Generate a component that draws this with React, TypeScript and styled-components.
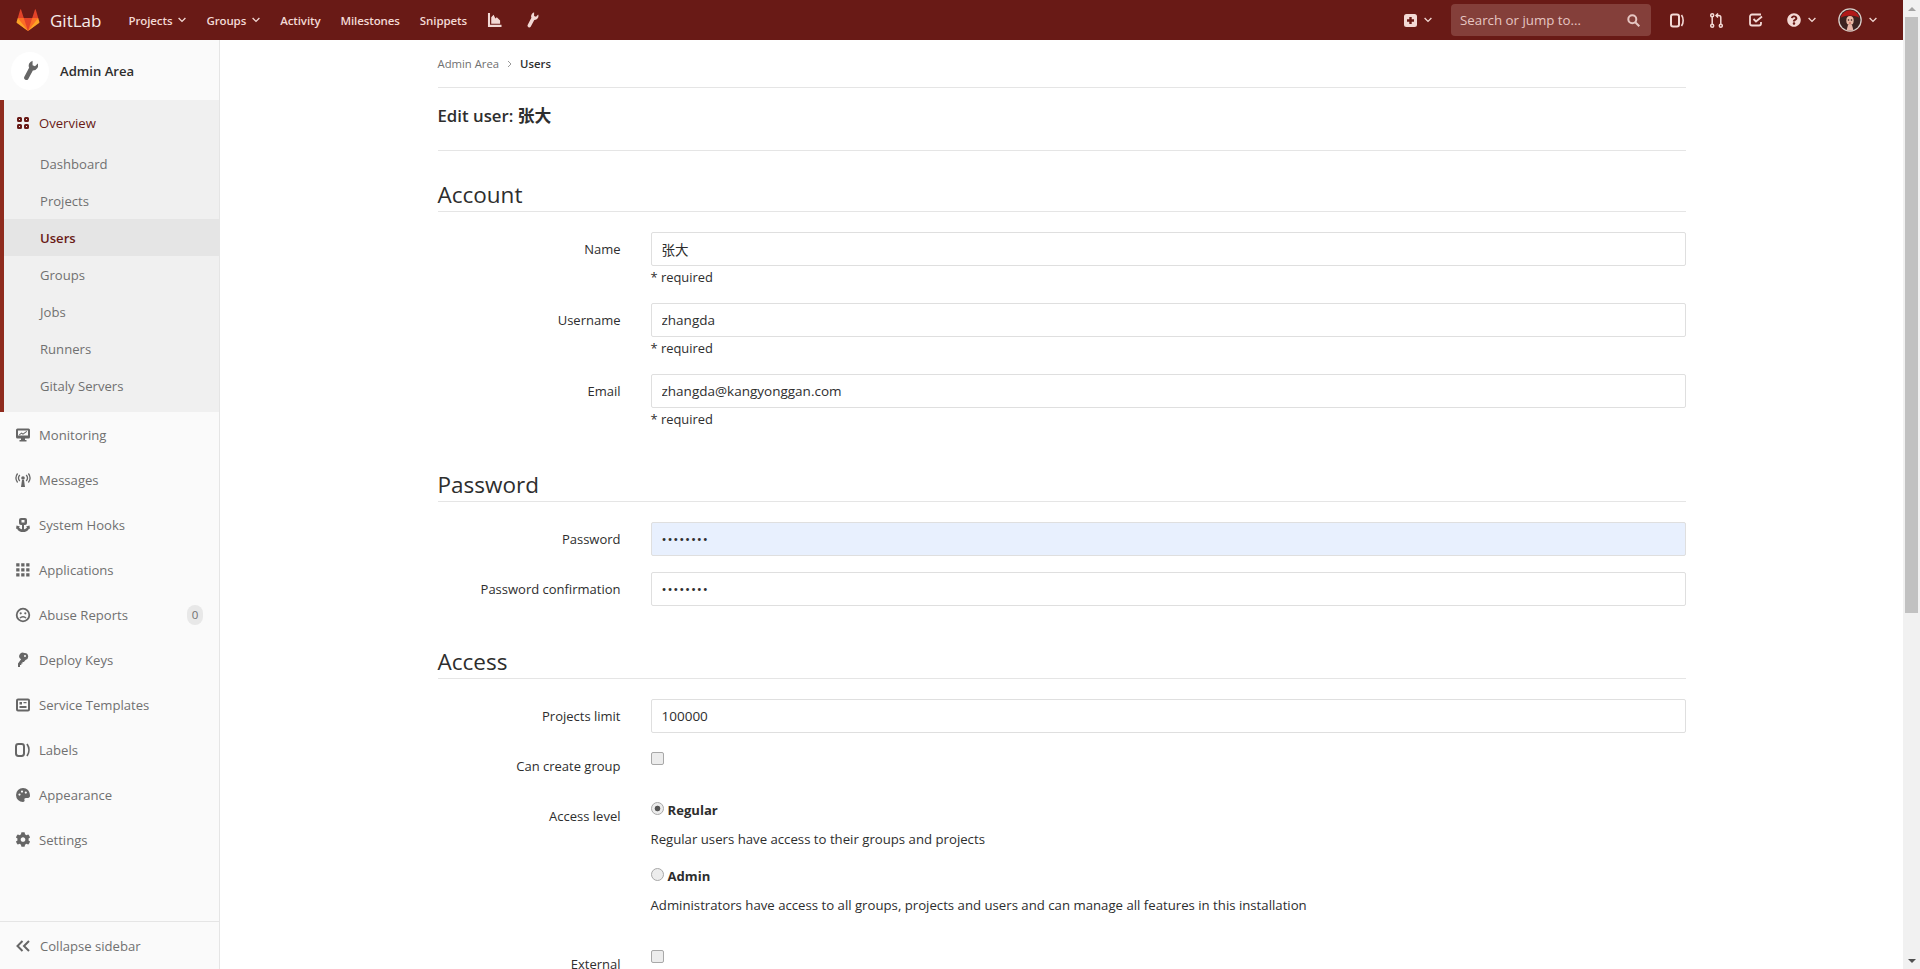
import { ReactNode } from "react";
import styled, { createGlobalStyle } from "styled-components";
import { FaCog, FaQuestionCircle } from "react-icons/fa";

const font = `"Open Sans", "Noto Sans CJK SC", sans-serif`;
const navText = "#f3d9d5";

const GlobalStyle = createGlobalStyle`
  html, body { margin: 0; height: 100%; overflow: hidden; }
  body { font-family: ${font}; font-size: 13.1px; color: #2e2e2e; background: #fff; }
  #root { height: 100%; }
  * { box-sizing: border-box; }
`;

function Icon({ size = 16, children }: { size?: number; children: ReactNode }) {
  return (
    <svg width={size} height={size} viewBox="0 0 16 16" fill="currentColor">
      {children}
    </svg>
  );
}

const Chevron = () => (
  <svg width="8" height="6" viewBox="0 0 8 6" fill="none" stroke="currentColor" strokeWidth="1.3">
    <path d="M.6 1l3.4 3.4L7.4 1" />
  </svg>
);

const Tanuki = () => (
  <svg width="24" height="23" viewBox="0 0 36 36">
    <path fill="#e24329" d="M2 14l9.38 9v-9l-4.3-13.2a.62.62 0 0 0-1.17 0z" />
    <path fill="#e24329" d="M34 14l-9.38 9v-9l4.3-13.2a.62.62 0 0 1 1.17 0z" />
    <path fill="#e24329" d="M18 34.38L3 14h30z" />
    <path fill="#fc6d26" d="M18 34.38L11.38 14H2l4 11z" />
    <path fill="#fc6d26" d="M18 34.38L24.62 14H34l-4 11z" />
    <path fill="#fca326" d="M2 14L.1 20.16c-.18.565 0 1.2.5 1.56l17.42 12.66z" />
    <path fill="#fca326" d="M34 14l1.9 6.16c.18.565 0 1.2-.5 1.56L18 34.38z" />
  </svg>
);

const Wrench = ({ width, height }: { width: number; height: number }) => (
  <svg width={width} height={height} viewBox="0 0 16 22" fill="currentColor">
    <path d="M10.5.5A5.5 5.5 0 0 0 6.5 8L1.3 18a2.4 2.4 0 0 0 4.2 2.2L10.5 11a5.5 5.5 0 0 0 5.3-7.5l-3 3-2.600-1V.5z" />
  </svg>
);

const ChartIcon = () => (
  <svg width="15" height="14" viewBox="0 0 16 15" fill="currentColor">
    <path d="M1 0h2.200v12.500H15.500V15H1z" />
    <path d="M4.500 4.500L7 2l2 4 1.500-1.500L14 8v3.500H4.500z" />
  </svg>
);

const PlusSquare = () => (
  <svg width="13" height="13" viewBox="0 0 13 13" fill="currentColor">
    <path
      fillRule="evenodd"
      d="M2.500 0h8A2.500 2.500 0 0 1 13 2.500v8a2.500 2.500 0 0 1-2.500 2.500h-8A2.500 2.500 0 0 1 0 10.500v-8A2.500 2.500 0 0 1 2.500 0zM5.300 3v2.300H3v2.400h2.300V10h2.400V7.700H10V5.300H7.700V3z"
    />
  </svg>
);

const SearchIcon = () => (
  <svg width="13" height="13" viewBox="0 0 13 13" fill="none" stroke="currentColor" strokeWidth="2">
    <circle cx="5.300" cy="5.300" r="4" />
    <path d="M8.300 8.300l4 4" />
  </svg>
);

const IssuesIcon = () => (
  <svg width="14" height="15" viewBox="0 0 14 15" fill="none" stroke="currentColor">
    <rect x="1" y="1.500" width="8" height="12" rx="2" strokeWidth="2" />
    <path d="M11.500 2c2.200 3 2.200 8 0 11" strokeWidth="1.600" />
  </svg>
);

const MergeIcon = () => (
  <svg width="13" height="15" viewBox="0 0 13 15" fill="none" stroke="currentColor" strokeWidth="1.500">
    <circle cx="2.200" cy="2.300" r="1.500" />
    <circle cx="2.200" cy="12.700" r="1.500" />
    <circle cx="10.800" cy="12.700" r="1.500" />
    <path d="M2.200 4v7M10.800 11V4.500Q10.800 2.500 8.800 2.500H6.500M8 .5L6 2.500l2 2" />
  </svg>
);

const TodoIcon = () => (
  <svg width="14" height="14" viewBox="0 0 14 14" fill="none" stroke="currentColor" strokeWidth="1.800">
    <path d="M12 1.500H3A2 2 0 0 0 1 3.500v7a2 2 0 0 0 2 2h7a2 2 0 0 0 2-2V9" />
    <path d="M4.500 6l2.500 2.500 6-5" />
  </svg>
);

const UserAvatar = () => (
  <svg width="24" height="24" viewBox="0 0 24 24">
    <circle cx="12" cy="12" r="11.800" fill="#d8cfca" />
    <circle cx="12" cy="12" r="10.500" fill="#3c2220" />
    <path d="M2.500 10a9.700 9.700 0 0 1 19 0c-3-3.500-16-3.500-19 0z" fill="#b01818" />
    <ellipse cx="12" cy="12.500" rx="3.700" ry="4.500" fill="#e9b8a4" />
    <path d="M8.500 22.400l1.500-5.400h4l1.500 5.400z" fill="#e6b4a6" />
    <circle cx="10.500" cy="12" r=".8" fill="#2a1414" />
    <circle cx="13.500" cy="12" r=".8" fill="#2a1414" />
    <path d="M11.200 15h1.600" stroke="#c23a3a" />
  </svg>
);

const sideIcons: Record<string, ReactNode> = {
  monitoring: (
    <Icon>
      <path
        fillRule="evenodd"
        d="M2.500 1.500h11A1.500 1.500 0 0 1 15 3v7a1.500 1.500 0 0 1-1.500 1.500H10v1.500h1.500v1.500h-7V13H6v-1.500H2.500A1.500 1.500 0 0 1 1 10V3a1.500 1.500 0 0 1 1.500-1.500zM3 3.500v5h10v-5zM4 7.500l2.500-2 1.500 1L11.500 4l.6.800L8 7.800l-1.500-1-2 1.500z"
      />
    </Icon>
  ),
  messages: (
    <Icon>
      <circle cx="8" cy="6" r="1.800" />
      <path d="M7 8h2l1 7H6z" />
      <path
        d="M4.800 3a4.500 4.500 0 0 0 0 6M11.200 3a4.500 4.500 0 0 1 0 6M2.600 1.500a7.500 7.500 0 0 0 0 9M13.400 1.500a7.500 7.500 0 0 1 0 9"
        fill="none"
        stroke="currentColor"
        strokeWidth="1.300"
      />
    </Icon>
  ),
  hooks: (
    <Icon>
      <path
        fillRule="evenodd"
        d="M6 1h4a2 2 0 0 1 2 2v3a2 2 0 0 1-2 2H9v4.300c1.500-.2 2.500-1 3-2l-1-.8 3.500-1L15 12l-1-.6C13 14 10.500 15 8 15s-5-1-6-3.600L1 12l.5-3.500 3.500 1-1 .8c.5 1 1.500 1.800 3 2V8H6a2 2 0 0 1-2-2V3a2 2 0 0 1 2-2zm.5 2v2.500h3V3z"
      />
    </Icon>
  ),
  applications: (
    <Icon>
      <path d="M1.200 1.200h3.300v3.300H1.200zM6.200 1.200h3.300v3.300H6.200zM11.200 1.200h3.300v3.300h-3.300zM1.200 6.200h3.300v3.300H1.200zM6.200 6.200h3.300v3.300H6.200zM11.200 6.200h3.300v3.300h-3.300zM1.200 11.200h3.300v3.300H1.200zM6.200 11.200h3.300v3.300H6.200zM11.200 11.200h3.300v3.300h-3.300z" />
    </Icon>
  ),
  abuse: (
    <Icon>
      <circle cx="8" cy="8" r="6.300" fill="none" stroke="currentColor" strokeWidth="1.800" />
      <circle cx="5.700" cy="6.300" r="1.100" />
      <circle cx="10.300" cy="6.300" r="1.100" />
      <path d="M5 11.200c1.500-2 4.500-2 6 0" fill="none" stroke="currentColor" strokeWidth="1.400" />
    </Icon>
  ),
  keys: (
    <Icon>
      <path
        fillRule="evenodd"
        d="M9.500 1a3.500 3.500 0 0 1 1 6.900L8.900 10H7.500v1.500H6.300V13H5v2H3v-3.500l3.100-4.200A3.500 3.500 0 0 1 9.500 1zm.5 2a1 1 0 1 0 0 2 1 1 0 0 0 0-2z"
      />
    </Icon>
  ),
  templates: (
    <Icon>
      <path
        fillRule="evenodd"
        d="M3 1.500h10A2 2 0 0 1 15 3.500v9a2 2 0 0 1-2 2H3a2 2 0 0 1-2-2v-9a2 2 0 0 1 2-2zm0 2v9h10v-9zM4.500 5H7v2.500H4.500zM8.500 5h3v1.200h-3zM4.500 9h7v2h-7z"
      />
    </Icon>
  ),
  labels: (
    <Icon>
      <rect x="1" y="2" width="8" height="12" rx="2.400" fill="none" stroke="currentColor" strokeWidth="2" />
      <path d="M12 2c2.500 3.500 2.500 8.500 0 12" fill="none" stroke="currentColor" strokeWidth="1.800" />
    </Icon>
  ),
  appearance: (
    <Icon>
      <path
        fillRule="evenodd"
        d="M8 1a7 7 0 1 0 0 14c1.300 0 1.900-.9 1.500-1.900-.5-1.200.2-2.100 1.400-2.100H13c1.200 0 2-.9 2-2.200C15 4 12 1 8 1zM4.500 6.500a1.100 1.100 0 1 1 0 2.200 1.100 1.100 0 0 1 0-2.200zM7 3.500a1.100 1.100 0 1 1 0 2.200 1.100 1.100 0 0 1 0-2.200zM10.800 4.500a1.100 1.100 0 1 1 0 2.200 1.100 1.100 0 0 1 0-2.200z"
      />
    </Icon>
  ),
  settings: <FaCog size={15} />,
};

const Root = styled.div`
  display: flex;
  height: 100%;
  overflow: hidden;
`;

const Page = styled.div`
  flex: 1;
  min-width: 0;
  display: flex;
  flex-direction: column;
`;

const Navbar = styled.header`
  flex: none;
  height: 40px;
  padding: 0 26px 0 16px;
  display: flex;
  align-items: center;
  background: #691a16;
  color: ${navText};
  font-weight: 600;
  font-size: 11.5px;
  letter-spacing: -0.1px;
`;

const Brand = styled.div`
  display: flex;
  align-items: center;
  gap: 10px;
  margin-right: 27px;
  color: #f6ecea;
  font-size: 17px;
  font-weight: 400;
  letter-spacing: 0;
`;

const NavLinks = styled.nav`
  display: flex;
  align-items: center;
  gap: 20px;
`;

const NavLink = styled.span<{ $before?: number }>`
  display: flex;
  align-items: center;
  gap: 6px;
  margin-left: ${(p) => p.$before ?? 0}px;
  white-space: nowrap;
`;

const NavRight = styled.div`
  margin-left: auto;
  display: flex;
  align-items: center;
  gap: 19px;
`;

const NavIcons = styled.div`
  display: flex;
  align-items: center;
  gap: 26px;
`;

const NavIcon = styled.span<{ $before?: number }>`
  display: flex;
  align-items: center;
  gap: 7px;
  margin-left: ${(p) => p.$before ?? 0}px;
`;

const SearchBox = styled.div`
  width: 200px;
  height: 32px;
  padding: 0 11px 0 9px;
  display: flex;
  align-items: center;
  justify-content: space-between;
  border-radius: 4px;
  background: #843f3a;
  color: #e6c6c2;
  font-size: 13.3px;
  font-weight: 400;
  letter-spacing: 0;
`;

const Body = styled.div`
  flex: 1;
  min-height: 0;
  display: flex;
`;

const Sidebar = styled.aside`
  flex: none;
  width: 220px;
  display: flex;
  flex-direction: column;
  background: #fafafa;
  border-right: 1px solid #e5e5e5;
  color: #707070;
`;

const SidebarHead = styled.div`
  flex: none;
  height: 60px;
  padding: 1px 0 0 11px;
  display: flex;
  align-items: center;
  gap: 11px;
  color: #2e2e2e;
  font-weight: 600;
`;

const HeadAvatar = styled.div`
  width: 38px;
  height: 38px;
  display: flex;
  align-items: center;
  justify-content: center;
  border-radius: 50%;
  background: #fff;
  color: #666;
`;

const ActiveGroup = styled.div`
  flex: none;
  padding-bottom: 8px;
  background: #f0f0f0;
  border-left: 4px solid #8f2b1e;
`;

const GroupTitle = styled.div`
  height: 45px;
  padding-left: 13px;
  display: flex;
  align-items: center;
  gap: 10px;
  color: #691a16;
  font-weight: 500;
`;

const OverviewDots = styled.span`
  width: 12px;
  height: 12px;
  display: grid;
  grid-template-columns: 5px 5px;
  grid-template-rows: 5px 5px;
  gap: 2px;
  & > i {
    border: 2px solid #691a16;
    border-radius: 1.5px;
  }
`;

const SubItem = styled.div<{ $active?: boolean }>`
  height: 37px;
  padding-left: 36px;
  display: flex;
  align-items: center;
  background: ${(p) => (p.$active ? "#e5e5e5" : "transparent")};
  color: ${(p) => (p.$active ? "#691a16" : "#707070")};
  font-weight: ${(p) => (p.$active ? 600 : 400)};
`;

const MenuItem = styled.div`
  flex: none;
  height: 45px;
  padding: 0 16px 0 15px;
  display: flex;
  align-items: center;
  gap: 8px;
  & > svg {
    flex: none;
    width: 16px;
    color: #666;
  }
`;

const Badge = styled.span`
  margin-left: auto;
  width: 16px;
  height: 20px;
  display: flex;
  align-items: center;
  justify-content: center;
  border-radius: 8px;
  background: #e8e8e8;
  font-size: 11.5px;
`;

const CollapseBar = styled.div`
  margin-top: auto;
  flex: none;
  height: 48px;
  padding-left: 16px;
  display: flex;
  align-items: center;
  gap: 10px;
  border-top: 1px solid #e5e5e5;
`;

const Content = styled.main`
  flex: 1;
  min-width: 0;
  overflow: hidden;
`;

const Container = styled.div`
  width: 1280px;
  margin: 0 auto;
  padding: 0 16px;
`;

const Breadcrumb = styled.div`
  height: 48px;
  display: flex;
  align-items: center;
  gap: 8px;
  border-bottom: 1px solid #e5e5e5;
  color: #707070;
  font-size: 11.3px;
  & > b {
    color: #2e2e2e;
    font-weight: 600;
  }
`;

const Title = styled.h3`
  margin: 0;
  padding: 16px 0 22px;
  line-height: 24px;
  border-bottom: 1px solid #e5e5e5;
  font-size: 16.8px;
  font-weight: 600;
`;

const Legend = styled.div<{ $first?: boolean }>`
  margin: ${(p) => (p.$first ? 28 : 40)}px 0 20px;
  height: 33px;
  line-height: 32px;
  border-bottom: 1px solid #e5e5e5;
  font-size: 22.5px;
  font-weight: 400;
`;

const Row = styled.div`
  margin-bottom: 16px;
  min-height: 34px;
  display: grid;
  grid-template-columns: 183px 1fr;
  column-gap: 30px;
`;

const Label = styled.label`
  padding-top: 7px;
  line-height: 20px;
  font-size: 13px;
  text-align: right;
`;

const TextInput = styled.input<{ $filled?: boolean }>`
  display: block;
  width: 100%;
  height: 34px;
  padding: 0 10px;
  border: 1px solid #dfdfdf;
  border-radius: 2px;
  outline: none;
  background: ${(p) => (p.$filled ? "#e8f0fe" : "#fff")};
  color: #2e2e2e;
  font-family: inherit;
  font-size: 13.5px;
  &[type="password"] {
    letter-spacing: 0.8px;
  }
`;

const Help = styled.div`
  margin-top: 1px;
  line-height: 20px;
  font-size: 12.9px;
`;

const Check = styled.input`
  appearance: none;
  display: block;
  width: 13px;
  height: 13px;
  margin: 3px 0 0;
  border: 1px solid #a8a8a8;
  border-radius: 2px;
  background: #ececec;
`;

const Radio = styled.input`
  appearance: none;
  flex: none;
  width: 13px;
  height: 13px;
  margin: 0;
  border: 1px solid #a8a8a8;
  border-radius: 50%;
  background: #ececec;
  &:checked {
    background: radial-gradient(circle, #555 0 2.5px, #ececec 3.2px);
  }
`;

const RadioLine = styled.div`
  display: flex;
  align-items: center;
  gap: 4px;
  height: 20px;
  margin-top: 1px;
  font-weight: 700;
  & > input {
    margin-top: -4px;
  }
`;

const RadioHelp = styled.div`
  margin: 9px 0 17px;
  line-height: 20px;
  font-size: 13.2px;
  &:last-child {
    margin-bottom: 16px;
  }
`;

const Scrollbar = styled.div`
  flex: none;
  width: 17px;
  display: flex;
  flex-direction: column;
  background: #f1f1f1;
`;

const ScrollArrow = styled.div<{ $down?: boolean }>`
  flex: none;
  height: 17px;
  display: flex;
  align-items: center;
  justify-content: center;
  &::before {
    content: "";
    border-left: 4px solid transparent;
    border-right: 4px solid transparent;
    ${(p) => (p.$down ? "border-top: 4px solid #505050;" : "border-bottom: 4px solid #a3a3a3;")}
  }
`;

const ScrollThumb = styled.div`
  flex: none;
  height: 596px;
  margin: 0 2px;
  background: #c1c1c1;
`;

const ScrollGap = styled.div`
  flex: 1;
`;

const subItems = ["Dashboard", "Projects", "Users", "Groups", "Jobs", "Runners", "Gitaly Servers"];

const menuItems: { key: string; label: string; badge?: string }[] = [
  { key: "monitoring", label: "Monitoring" },
  { key: "messages", label: "Messages" },
  { key: "hooks", label: "System Hooks" },
  { key: "applications", label: "Applications" },
  { key: "abuse", label: "Abuse Reports", badge: "0" },
  { key: "keys", label: "Deploy Keys" },
  { key: "templates", label: "Service Templates" },
  { key: "labels", label: "Labels" },
  { key: "appearance", label: "Appearance" },
  { key: "settings", label: "Settings" },
];

function TopBar() {
  return (
    <Navbar>
      <Brand>
        <Tanuki />
        GitLab
      </Brand>
      <NavLinks>
        <NavLink>Projects <Chevron /></NavLink>
        <NavLink>Groups <Chevron /></NavLink>
        <NavLink>Activity</NavLink>
        <NavLink>Milestones</NavLink>
        <NavLink>Snippets</NavLink>
        <NavLink><ChartIcon /></NavLink>
        <NavLink $before={4}><Wrench width={13} height={16} /></NavLink>
      </NavLinks>
      <NavRight>
        <NavIcon><PlusSquare /><Chevron /></NavIcon>
        <SearchBox>
          Search or jump to...
          <SearchIcon />
        </SearchBox>
        <NavIcons>
          <NavIcon><IssuesIcon /></NavIcon>
          <NavIcon><MergeIcon /></NavIcon>
          <NavIcon><TodoIcon /></NavIcon>
          <NavIcon $before={-2}><FaQuestionCircle size={14} /><Chevron /></NavIcon>
          <NavIcon $before={-4}><UserAvatar /><Chevron /></NavIcon>
        </NavIcons>
      </NavRight>
    </Navbar>
  );
}

function SideNav() {
  return (
    <Sidebar>
      <SidebarHead>
        <HeadAvatar>
          <Wrench width={15} height={21} />
        </HeadAvatar>
        Admin Area
      </SidebarHead>
      <ActiveGroup>
        <GroupTitle>
          <OverviewDots><i /><i /><i /><i /></OverviewDots>
          Overview
        </GroupTitle>
        {subItems.map((item) => (
          <SubItem key={item} $active={item === "Users"}>{item}</SubItem>
        ))}
      </ActiveGroup>
      {menuItems.map((item) => (
        <MenuItem key={item.key}>
          {sideIcons[item.key]}
          {item.label}
          {item.badge && <Badge>{item.badge}</Badge>}
        </MenuItem>
      ))}
      <CollapseBar>
        <svg width="14" height="12" viewBox="0 0 14 12" fill="none" stroke="#666" strokeWidth="2">
          <path d="M6.5 1L1.5 6l5 5M13 1L8 6l5 5" />
        </svg>
        Collapse sidebar
      </CollapseBar>
    </Sidebar>
  );
}

function TextRow({ label, value, required, type, filled }: {
  label: string;
  value: string;
  required?: boolean;
  type?: string;
  filled?: boolean;
}) {
  return (
    <Row>
      <Label>{label}</Label>
      <div>
        <TextInput readOnly type={type ?? "text"} value={value} $filled={filled} />
        {required && <Help>* required</Help>}
      </div>
    </Row>
  );
}

export default function App() {
  return (
    <Root>
      <GlobalStyle />
      <Page>
        <TopBar />
        <Body>
          <SideNav />
          <Content>
            <Container>
              <Breadcrumb>
                Admin Area
                <svg width="5" height="8" viewBox="0 0 5 8" fill="none" stroke="#999">
                  <path d="M1 1l3 3-3 3" />
                </svg>
                <b>Users</b>
              </Breadcrumb>
              <Title>Edit user: 张大</Title>

              <Legend $first>Account</Legend>
              <TextRow label="Name" value="张大" required />
              <TextRow label="Username" value="zhangda" required />
              <TextRow label="Email" value="zhangda@kangyonggan.com" required />

              <Legend>Password</Legend>
              <TextRow label="Password" value="12345678" type="password" filled />
              <TextRow label="Password confirmation" value="12345678" type="password" />

              <Legend>Access</Legend>
              <TextRow label="Projects limit" value="100000" />
              <Row>
                <Label>Can create group</Label>
                <div><Check type="checkbox" readOnly /></div>
              </Row>
              <Row>
                <Label>Access level</Label>
                <div>
                  <RadioLine><Radio type="radio" name="level" defaultChecked />Regular</RadioLine>
                  <RadioHelp>Regular users have access to their groups and projects</RadioHelp>
                  <RadioLine><Radio type="radio" name="level" />Admin</RadioLine>
                  <RadioHelp>Administrators have access to all groups, projects and users and can manage all features in this installation</RadioHelp>
                </div>
              </Row>
              <Row>
                <Label>External</Label>
                <div><Check type="checkbox" readOnly /></div>
              </Row>
            </Container>
          </Content>
        </Body>
      </Page>
      <Scrollbar>
        <ScrollArrow />
        <ScrollThumb />
        <ScrollGap />
        <ScrollArrow $down />
      </Scrollbar>
    </Root>
  );
}
